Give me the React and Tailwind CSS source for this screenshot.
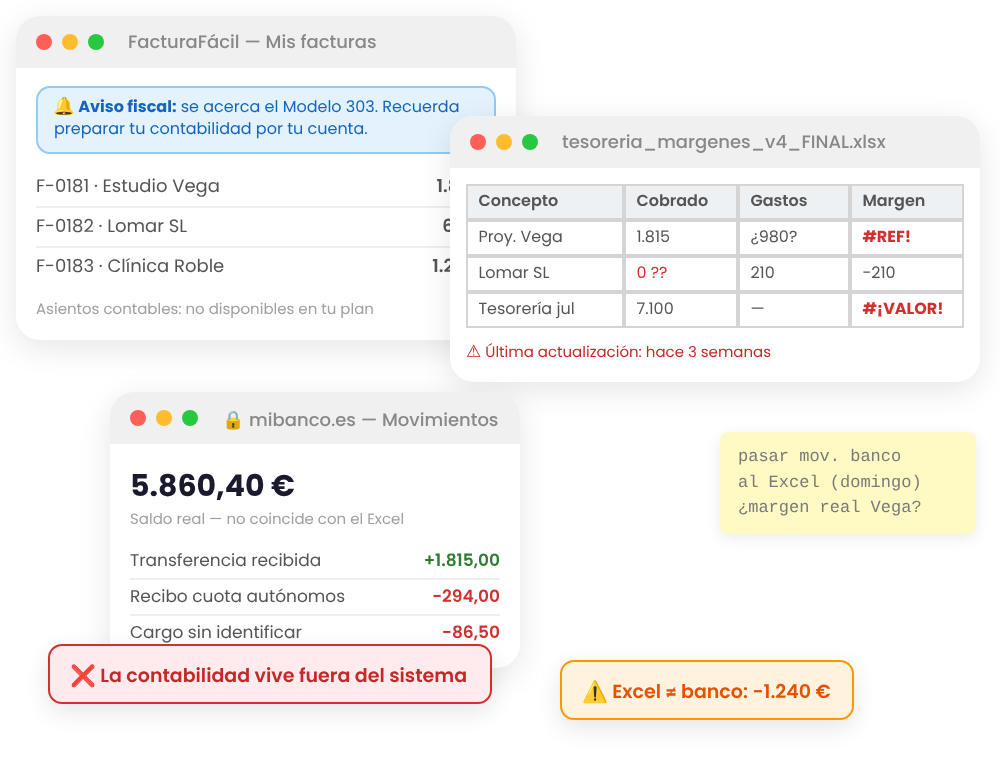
const POP = "font-['Poppins',sans-serif] [text-rendering:geometricPrecision] blur-[0.3px]";

function Dots() {
  return (
    <div className="flex items-center gap-[10px]">
      <span className="h-4 w-4 rounded-full bg-[#ff5f57]" />
      <span className="h-4 w-4 rounded-full bg-[#febc2e]" />
      <span className="h-4 w-4 rounded-full bg-[#28c840]" />
    </div>
  );
}

function Bar({ children }) {
  return (
    <div className="flex h-[52px] items-center gap-6 bg-[#f0f0f0] px-5">
      <Dots />
      <span className="whitespace-nowrap text-[18px] font-medium text-[#888888]">{children}</span>
    </div>
  );
}

function Emoji({ children }) {
  return <span className="inline-block scale-110">{children}</span>;
}

function Row({ label, value, color, pad }) {
  return (
    <div className={`flex items-center justify-between ${pad}`}>
      <span className="whitespace-nowrap text-[#555555]">{label}</span>
      <span className={`whitespace-nowrap font-semibold ${color}`}>{value}</span>
    </div>
  );
}

function Cell({ children, head, className = "" }) {
  return (
    <td className={`h-9 border-2 border-[#d4d4d4] px-[10.4px] pb-[2px] pt-0 text-[16px] ${head ? "bg-[#eef1f4] font-semibold text-[#555555]" : "bg-white text-[#555555]"} ${className}`}>
      {children}
    </td>
  );
}

export default function App() {
  return (
    <div className={`relative h-[760px] w-[1000px] overflow-hidden bg-white ${POP}`}>
      <div className="absolute left-4 top-4 h-[324px] w-[500px] overflow-hidden rounded-[24px] bg-white shadow-[0_8px_32px_rgba(0,0,0,0.1)]">
        <Bar>FacturaFácil — Mis facturas</Bar>
        <div className="px-5 pt-[18px]">
          <div className="h-[68px] rounded-[14px] border-2 border-[#90caf9] bg-[#e3f2fd] px-4 pt-2 text-[16px] leading-[22.4px] text-[#1565c0]">
            <Emoji>🔔</Emoji> <strong className="font-bold">Aviso fiscal:</strong> se acerca el Modelo 303. Recuerda preparar tu contabilidad por tu cuenta.
          </div>
          <div className="mt-[14px] text-[18px]">
            <Row pad="h-10 border-b-2 border-[#eeeeee] pb-[2px]" label="F-0181 · Estudio Vega" value="1.815 €" color="text-[#555555]" />
            <Row pad="h-10 border-b-2 border-[#eeeeee] pb-[2px]" label="F-0182 · Lomar SL" value="640 €" color="text-[#555555]" />
            <Row pad="h-10 pb-[4px]" label="F-0183 · Clínica Roble" value="1.240 €" color="text-[#555555]" />
          </div>
          <p className="mt-[11px] text-[15px] text-[#a0a0a0]">Asientos contables: no disponibles en tu plan</p>
        </div>
      </div>

      <div className="absolute left-[450px] top-[116px] h-[266px] w-[530px] overflow-hidden rounded-[24px] bg-white shadow-[0_8px_32px_rgba(0,0,0,0.1)]">
        <Bar>tesoreria_margenes_v4_FINAL.xlsx</Bar>
        <div className="px-4 pt-4">
          <table className="w-[498px] table-fixed border-separate border-spacing-0">
            <colgroup>
              <col className="w-[158px]" />
              <col className="w-[114px]" />
              <col className="w-[112px]" />
              <col className="w-[114px]" />
            </colgroup>
            <tbody>
              <tr><Cell head>Concepto</Cell><Cell head>Cobrado</Cell><Cell head>Gastos</Cell><Cell head>Margen</Cell></tr>
              <tr><Cell>Proy. Vega</Cell><Cell>1.815</Cell><Cell>¿980?</Cell><Cell className="font-bold text-[#d32f2f]">#REF!</Cell></tr>
              <tr><Cell>Lomar SL</Cell><Cell className="text-[#d32f2f]">0 ??</Cell><Cell>210</Cell><Cell>-210</Cell></tr>
              <tr><Cell>Tesorería jul</Cell><Cell>7.100</Cell><Cell>—</Cell><Cell className="font-bold text-[#d32f2f]">#¡VALOR!</Cell></tr>
            </tbody>
          </table>
          <p className="mt-[14px] text-[15px] text-[#c62828]"><span className="text-[17px] leading-none">⚠</span> Última actualización: hace 3 semanas</p>
        </div>
      </div>

      <div className="absolute left-[110px] top-[392px] h-[276px] w-[410px] overflow-hidden rounded-[24px] bg-white shadow-[0_8px_32px_rgba(0,0,0,0.1)]">
        <Bar><span className="relative top-[2px]">🔒 mibanco.es — Movimientos</span></Bar>
        <div className="px-5 pt-[18px]">
          <div className="text-[30px] font-bold leading-[48px] text-[#1a1a2e]">5.860,40 €</div>
          <p className="text-[15px] leading-[19px] text-[#a0a0a0]">Saldo real — no coincide con el Excel</p>
          <div className="mt-[15px] text-[17px]">
            <Row pad="h-9 border-b-2 border-[#eeeeee]" label="Transferencia recibida" value="+1.815,00" color="text-[#2e7d32]" />
            <Row pad="h-9 border-b-2 border-[#eeeeee]" label="Recibo cuota autónomos" value="-294,00" color="text-[#d32f2f]" />
            <Row pad="h-9 pb-[2px]" label="Cargo sin identificar" value="-86,50" color="text-[#d32f2f]" />
          </div>
        </div>
      </div>

      <div className="absolute left-[720px] top-[432px] h-[102px] w-[256px] rounded-lg bg-[#fff9c4] px-[18px] pt-[13px] font-['Liberation_Mono',monospace] text-[17px] leading-[25.5px] text-[#7a7a7a] shadow-[0_4px_16px_rgba(0,0,0,0.08)]">
        pasar mov. banco<br />al Excel (domingo)<br />¿margen real Vega?
      </div>

      <div className="absolute left-12 top-[644px] flex h-[60px] w-[444px] items-center whitespace-pre rounded-[14px] border-2 border-[#d32f2f] bg-[#ffebee] px-[22px] pt-[5px] text-[19px] font-semibold text-[#c62828] shadow-[0_8px_24px_rgba(0,0,0,0.1)]">
        <Emoji>❌</Emoji> La contabilidad vive fuera del sistema
      </div>

      <div className="absolute left-[560px] top-[660px] flex h-[60px] w-[294px] items-center whitespace-pre rounded-[14px] border-2 border-[#ff9800] bg-[#fff3e0] px-[22px] pt-[5px] text-[19px] font-semibold text-[#e65100] shadow-[0_8px_24px_rgba(0,0,0,0.1)]">
        <Emoji>⚠️</Emoji> Excel <span className="text-[16px] font-bold">≠</span> banco: -1.240 €
      </div>
    </div>
  );
}
